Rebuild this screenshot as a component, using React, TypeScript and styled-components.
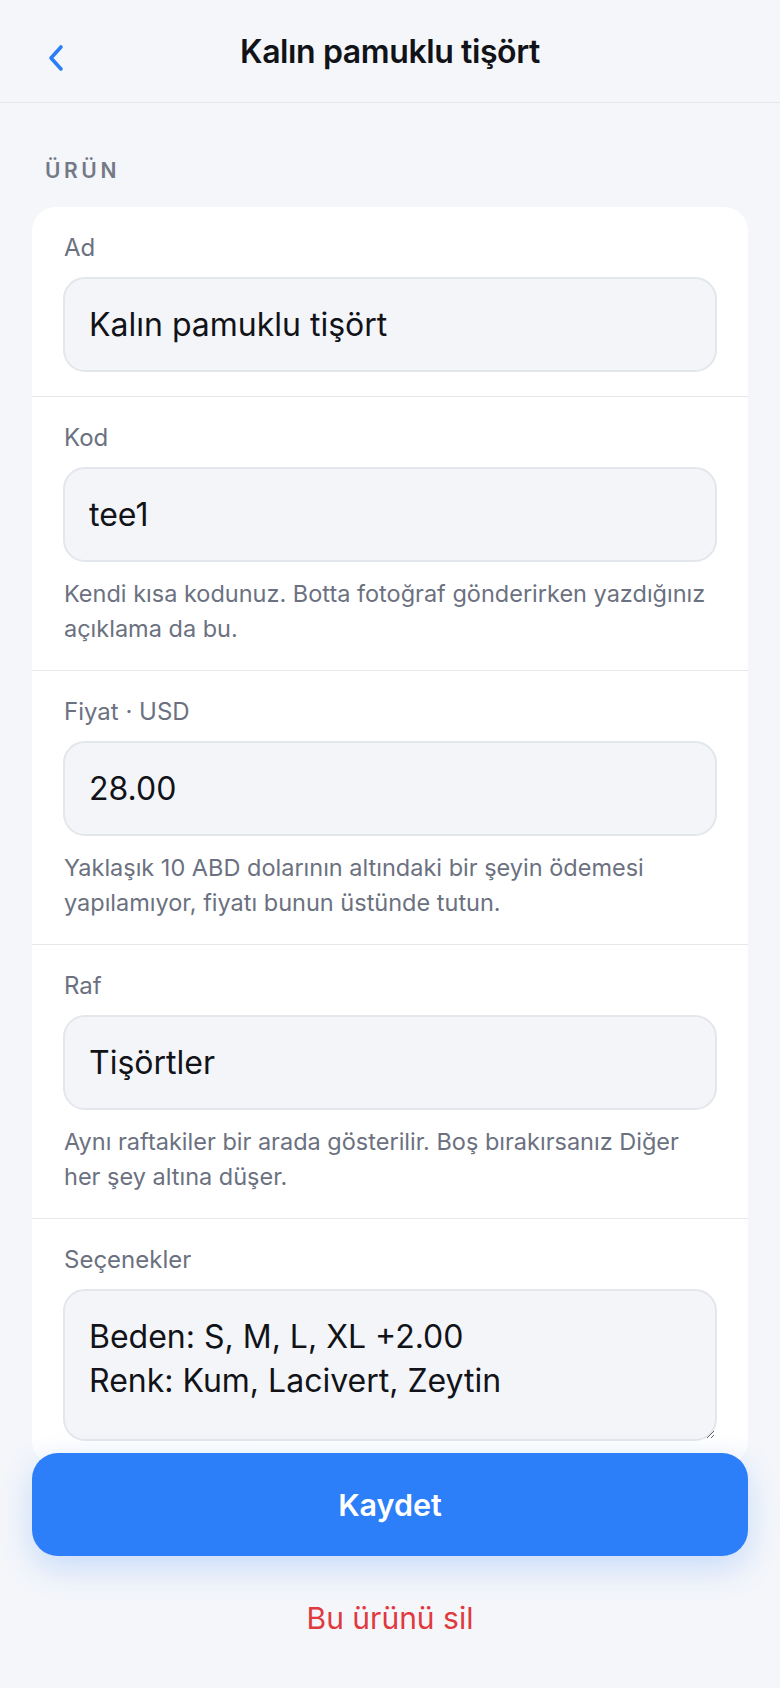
import React, {useState} from "react";
import styled, {createGlobalStyle} from "styled-components";

const GlobalStyle = createGlobalStyle`
  html, body, #root {
    margin: 0;
    height: 100%;
  }
  body {
    background: #f4f6fa;
    font-family: Inter, "Noto Sans", "Liberation Sans", sans-serif;
    color: #111318;
    overflow: hidden;
  }
  * {
    box-sizing: border-box;
  }
`;

type Field = {
    id: string;
    label: string;
    value: string;
    help?: string[];
    multiline?: boolean;
};

const initialFields: Field[] = [
    {id: "name", label: "Ad", value: "Kalın pamuklu tişört"},
    {
        id: "code",
        label: "Kod",
        value: "tee1",
        help: ["Kendi kısa kodunuz. Botta fotoğraf gönderirken yazdığınız", "açıklama da bu."]
    },
    {
        id: "price",
        label: "Fiyat · USD",
        value: "28.00",
        help: ["Yaklaşık 10 ABD dolarının altındaki bir şeyin ödemesi", "yapılamıyor, fiyatı bunun üstünde tutun."]
    },
    {
        id: "shelf",
        label: "Raf",
        value: "Tişörtler",
        help: ["Aynı raftakiler bir arada gösterilir. Boş bırakırsanız Diğer", "her şey altına düşer."]
    },
    {
        id: "options",
        label: "Seçenekler",
        value: "Beden: S, M, L, XL +2.00\nRenk: Kum, Lacivert, Zeytin",
        multiline: true
    }
];

const App: React.FC = () => {

    const [fields, setFields] = useState<Field[]>(initialFields);

    const handleChange = (id: string, value: string) => {
        setFields(fields.map(el => el.id === id ? {...el, value} : el))
    }

    return (
        <Screen>
            <GlobalStyle/>

            <Header>
                <BackButton aria-label="Geri">
                    <svg width="18" height="28" viewBox="0 0 18 28" fill="none">
                        <polyline points="14,3 4,14 14,25" stroke="currentColor" strokeWidth="3.6"
                                  strokeLinecap="round" strokeLinejoin="round"/>
                    </svg>
                </BackButton>
                <Title>{fields[0].value}</Title>
            </Header>

            <Scroll>
                <SectionLabel>Ürün</SectionLabel>

                <Card>
                    {fields.map(field => (
                        <Row key={field.id}>
                            <Label htmlFor={field.id}>{field.label}</Label>
                            {field.multiline
                                ? <TextArea id={field.id} value={field.value} rows={2}
                                            onChange={e => handleChange(field.id, e.target.value)}/>
                                : <Input id={field.id} value={field.value}
                                         onChange={e => handleChange(field.id, e.target.value)}/>}
                            {field.help && (
                                <Help>
                                    {field.help.map(line => <HelpLine key={line}>{line}</HelpLine>)}
                                </Help>
                            )}
                        </Row>
                    ))}
                </Card>
            </Scroll>

            <Footer>
                <SaveButton>Kaydet</SaveButton>
                <DeleteButton>Bu ürünü sil</DeleteButton>
            </Footer>
        </Screen>
    )
}

export default App

const Screen = styled.div`
  position: relative;
  height: 100vh;
  display: flex;
  flex-direction: column;
  background: #f4f6fa;
`;
const Header = styled.header`
  flex: none;
  height: 103px;
  display: flex;
  align-items: center;
  justify-content: center;
  position: relative;
  border-bottom: 1px solid #e4e7ec;
  background: #f5f6f9;
`;
const BackButton = styled.button`
  position: absolute;
  left: 47px;
  top: 44px;
  padding: 0;
  border: none;
  background: none;
  color: #2b7ff6;
  display: flex;
`;
const Title = styled.h1`
  margin: 0;
  font-size: 32px;
  font-weight: 600;
  letter-spacing: -0.4px;
  color: #111318;
`;
const Scroll = styled.main`
  flex: 1;
  overflow-y: auto;
  padding: 54px 32px 260px;
`;
const SectionLabel = styled.div`
  margin: 0 0 22px 13px;
  font-size: 21px;
  line-height: 28px;
  font-weight: 600;
  letter-spacing: 3.6px;
  text-transform: uppercase;
  color: #737985;
`;
const Card = styled.section`
  background: #ffffff;
  border-radius: 24px;
  overflow: hidden;
`;
const Row = styled.div`
  display: flex;
  flex-direction: column;
  padding: 26px 31px 24px;
  border-bottom: 1px solid #e6e8ec;

  &:last-child {
    border-bottom: none;
  }
`;
const Label = styled.label`
  font-size: 24px;
  line-height: 30px;
  color: #6b7180;
  margin: 0 0 14px 1px;
`;
const Input = styled.input`
  height: 95px;
  width: 100%;
  padding: 0 24px;
  border: 2px solid #e3e6eb;
  border-radius: 22px;
  background: #f4f5f9;
  font-family: inherit;
  font-size: 32px;
  color: #111318;
  outline: none;
`;
const TextArea = styled.textarea`
  width: 100%;
  height: 152px;
  padding: 24px 24px 20px;
  border: 2px solid #e3e6eb;
  border-radius: 22px;
  background: #f4f5f9;
  font-family: inherit;
  font-size: 32px;
  line-height: 44px;
  color: #111318;
  outline: none;
  resize: vertical;
`;
const Help = styled.p`
  margin: 14px 0 0 1px;
  font-size: 23.5px;
  line-height: 35px;
  color: #6b7180;
`;
const HelpLine = styled.span`
  display: block;
  white-space: nowrap;
`;
const Footer = styled.footer`
  position: absolute;
  left: 0;
  right: 0;
  bottom: 0;
  display: flex;
  flex-direction: column;
  align-items: center;
  padding: 14px 32px 44px;
  background: linear-gradient(to bottom, rgba(244, 246, 250, 0) 0, #f4f6fa 40px);
`;
const SaveButton = styled.button`
  width: 100%;
  height: 103px;
  border: none;
  border-radius: 26px;
  background: #2d7ff9;
  color: #ffffff;
  font-family: inherit;
  font-size: 30.5px;
  font-weight: 600;
  box-shadow: 0 12px 32px rgba(45, 127, 249, 0.22);
`;
const DeleteButton = styled.button`
  margin-top: 36px;
  padding: 8px 20px;
  border: none;
  background: none;
  color: #e0393e;
  font-family: inherit;
  font-size: 30px;
`;
